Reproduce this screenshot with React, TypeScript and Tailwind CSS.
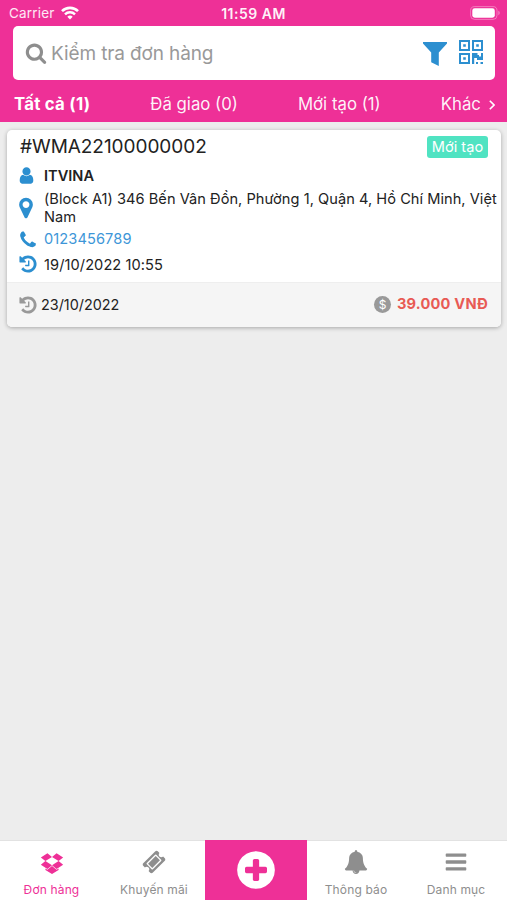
import React from 'react';
import clsx from 'clsx';

// 1792 grid glyph paths
const ICONS = {
  search:
    'M1216 832q0-185-131.5-316.5t-316.5-131.5-316.5 131.5-131.5 316.5 131.5 316.5 316.5 131.5 316.5-131.5 131.5-316.5zm512 832q0 52-38 90t-90 38q-54 0-90-38l-343-342q-179 124-399 124-143 0-273.5-55.5t-225-150-150-225-55.5-273.5 55.5-273.5 150-225 225-150 273.5-55.5 273.5 55.5 225 150 150 225 55.5 273.5q0 220-124 399l343 343q37 37 37 90z',
  user: 'M1536 1399q0 109-62.5 187t-150.5 78h-854q-88 0-150.5-78t-62.5-187q0-85 8.5-160.5t31.5-152 58.5-131 94-89 134.5-34.5q131 128 313 128t313-128q76 0 134.5 34.5t94 89 58.5 131 31.5 152 8.5 160.5zm-256-887q0 159-112.5 271.5t-271.5 112.5-271.5-112.5-112.5-271.5 112.5-271.5 271.5-112.5 271.5 112.5 112.5 271.5z',
  marker:
    'M1152 640q0-106-75-181t-181-75-181 75-75 181 75 181 181 75 181-75 75-181zm256 0q0 109-33 179l-364 774q-16 33-47.5 52t-67.5 19-67.5-19-46.5-52l-365-774q-33-70-33-179 0-212 150-362t362-150 362 150 150 362z',
  phone:
    'M1600 1240q0 27-10 70.5t-21 68.5q-21 50-122 106-94 51-186 51-27 0-52.5-3.5t-57.5-12.5-47.5-14.5-55.5-20.5-49-18q-98-35-175-83-128-79-264.5-215.5t-215.5-264.5q-48-77-83-175-3-9-18-49t-20.5-55.5-14.5-47.5-12.5-57.5-3.5-52.5q0-92 51-186 56-101 106-122 25-11 68.5-21t70.5-10q14 0 21 3 18 6 53 76 11 19 30 54t35 63.5 31 53.5q3 4 17.5 25t21.5 35.5 7 28.5q0 20-28.5 50t-62 55-62 53-28.5 46q0 9 5 22.5t8.5 20.5 14 24 11.5 19q76 137 174 235t235 174q2 1 19 11.5t24 14 20.5 8.5 22.5 5q18 0 46-28.5t53-62 55-62 50-28.5q14 0 28.5 7t35.5 21.5 25 17.5q25 15 53.5 31t63.5 35 54 30q70 35 76 53 3 7 3 21z',
  history:
    'M1664 896q0 156-61 298t-164 245-245 164-298 61q-172 0-327-72.5t-264-204.5q-7-10-6.5-22.5t8.5-20.5l137-138q10-9 25-9 16 2 23 12 73 95 179 147t225 52q104 0 198.5-40.5t163.5-109.5 109.5-163.5 40.5-198.5-40.5-198.5-109.5-163.5-163.5-109.5-198.5-40.5q-98 0-188 35.5t-160 101.5l137 138q31 30 14 69-17 40-59 40h-448q-26 0-45-19t-19-45v-448q0-42 40-59 39-17 69 14l130 129q107-101 244.5-156.5t284.5-55.5q156 0 298 61t245 164 164 245 61 298zm-640-288v448q0 14-9 23t-23 9h-320q-14 0-23-9t-9-23v-64q0-14 9-23t23-9h224v-352q0-14 9-23t23-9h64q14 0 23 9t9 23z',
  dropbox:
    'M402 829l494 305-342 285-490-319zm985 555v108l-490 293v1l-1-1-1 1v-1l-489-293v-108l147 96 342-284v-2l1 1 1-1v2l343 284zm-833-1145l342 285-494 304-338-270zm836 590l338 271-489 319-343-285zm-151-590l489 319-338 270-494-304z',
  ticket:
    'M1024 452l316 316-572 572-316-316zm-211 979l618-618q19-19 19-45t-19-45l-362-362q-18-18-45-18t-45 18l-618 618q-19 19-19 45t19 45l362 362q18 18 45 18t45-18zm889-637l-907 908q-37 37-90.5 37t-90.5-37l-126-126q56-56 56-136t-56-136-136-56-136 56l-125-126q-37-37-37-90.5t37-90.5l907-906q37-37 90.5-37t90.5 37l125 125q-56 56-56 136t56 136 136 56 136-56l126 125q37 37 37 90.5t-37 90.5z',
  plus: 'M1344 960v-128q0-26-19-45t-45-19h-256v-256q0-26-19-45t-45-19h-128q-26 0-45 19t-19 45v256h-256q-26 0-45 19t-19 45v128q0 26 19 45t45 19h256v256q0 26 19 45t45 19h128q26 0 45-19t19-45v-256h256q26 0 45-19t19-45zm320-64q0 209-103 385.5t-279.5 279.5-385.5 103-385.5-103-279.5-279.5-103-385.5 103-385.5 279.5-279.5 385.5-103 385.5 103 279.5 279.5 103 385.5z',
  bell: 'M912 1696q0-16-16-16-59 0-101.5-42.5t-42.5-101.5q0-16-16-16t-16 16q0 73 51.5 124.5t124.5 51.5q16 0 16-16zm816-288q0 52-38 90t-90 38h-448q0 106-75 181t-181 75-181-75-75-181h-448q-52 0-90-38t-38-90q50-42 91-88t85-119.5 74.5-158.5 50-206 19.5-260q0-152 117-282.5t307-158.5q-8-19-8-39 0-40 28-68t68-28 68 28 28 68q0 20-8 39 190 28 307 158.5t117 282.5q0 139 19.5 260t50 206 74.5 158.5 85 119.5 91 88z',
  bars: 'M1664 1344v128q0 26-19 45t-45 19h-1408q-26 0-45-19t-19-45v-128q0-26 19-45t45-19h1408q26 0 45 19t19 45zm0-512v128q0 26-19 45t-45 19h-1408q-26 0-45-19t-19-45v-128q0-26 19-45t45-19h1408q26 0 45 19t19 45zm0-512v128q0 26-19 45t-45 19h-1408q-26 0-45-19t-19-45v-128q0-26 19-45t45-19h1408q26 0 45 19t19 45z',
};

type IconName = keyof typeof ICONS;

const Icon = ({ name, className }: { name: IconName; className?: string }) => (
  <svg
    viewBox="0 0 1792 1792"
    fill="currentColor"
    className={clsx('shrink-0', className)}
    aria-hidden="true"
  >
    <path d={ICONS[name]} />
  </svg>
);

const WifiIcon = () => (
  <svg viewBox="0 0 18 14" className="w-[18px] h-[14px]" fill="none">
    <path d="M1 5.2a11.3 11.3 0 0 1 16 0" stroke="white" strokeWidth="2.6" />
    <path d="M4 8.3a7 7 0 0 1 10 0" stroke="white" strokeWidth="2.4" />
    <path d="M9 13.6 6.3 10.8a3.8 3.8 0 0 1 5.4 0z" fill="white" />
  </svg>
);

const BatteryIcon = () => (
  <svg viewBox="0 0 31 14" className="w-[31px] h-[14px]" fill="none">
    <rect
      x="0.6"
      y="0.6"
      width="26.4"
      height="12.8"
      rx="4"
      stroke="white"
      strokeOpacity="0.35"
    />
    <rect x="2.3" y="2.3" width="22.5" height="9.4" rx="2.4" fill="white" />
    <path d="M28.3 4.8a2.4 2.4 0 0 1 0 4.4z" fill="white" fillOpacity="0.4" />
  </svg>
);

const FilterIcon = () => (
  <svg viewBox="0 0 24 24" className="w-6 h-6" fill="currentColor">
    <path d="M0 0h24v1.6L15.8 10.5V24l-7.6-3.8V10.5L0 1.6z" />
  </svg>
);

const QrIcon = () => (
  <svg viewBox="0 0 24 24" className="w-6 h-6" fill="currentColor">
    <path
      fillRule="evenodd"
      d="M0 0h11v11H0zM2 2v7h7V2zM13 0h11v11H13zM15 2v7h7V2zM0 13h11v11H0zM2 15v7h7v-7z"
    />
    <path d="M4.2 4.2h2.6v2.6H4.2zM17.2 4.2h2.6v2.6h-2.6zM4.2 17.2h2.6v2.6H4.2z" />
    <path d="M13 13h5.5v2H20v1.5h2V13h2v7h-6v-2h-2.8V24H13zM17 22h2v2h-2zM21.5 22H24v2h-2.5z" />
  </svg>
);

const FILTERS = ['Tất cả (1)', 'Đã giao (0)', 'Mới tạo (1)'];

const TABS: { label: string; icon: IconName; active?: boolean }[] = [
  { label: 'Đơn hàng', icon: 'dropbox', active: true },
  { label: 'Khuyến mãi', icon: 'ticket' },
  { label: 'Tạo đơn', icon: 'plus' },
  { label: 'Thông báo', icon: 'bell' },
  { label: 'Danh mục', icon: 'bars' },
];

const Header = () => (
  <header className="h-[122px] bg-[#ee3097] text-white flex flex-col">
    <div className="h-[26px] px-[9px] grid grid-cols-3 items-center text-[13px]">
      <div className="flex items-center gap-[6px]">
        <span className="text-[13.5px] tracking-[0.2px] text-white/90">
          Carrier
        </span>
        <WifiIcon />
      </div>
      <span className="text-center text-[14px] font-semibold tracking-[0.5px] text-white/95">
        11:59 AM
      </span>
      <div className="flex justify-end -mr-[3px]">
        <BatteryIcon />
      </div>
    </div>

    <div className="ml-[13px] mr-[12px] h-[54px] bg-white rounded-[5px] flex items-center px-3">
      <Icon name="search" className="w-[22px] h-[22px] text-[#8e8e8e]" />
      <span className="ml-1 mt-[2px] text-[19px] tracking-[-0.12px] text-[#999]">
        Kiểm tra đơn hàng
      </span>
      <div className="ml-auto flex gap-3 text-[#2c8fd0]">
        <div className="pt-[2px]">
          <FilterIcon />
        </div>
        <QrIcon />
      </div>
    </div>

    <nav className="flex-1 flex items-center justify-between pt-[7px] pl-[14px] pr-[12px] text-[16.8px]">
      {FILTERS.map((label, i) => (
        <button
          key={label}
          className={i === 0 ? 'font-bold tracking-[0.25px]' : 'text-white/95'}
        >
          {label}
        </button>
      ))}
      <button className="flex items-center gap-[8px] text-white/95">
        Khác
        <svg viewBox="0 0 6 10" className="w-[6px] h-[10px]" fill="none">
          <path d="M0.8 0.8 5 5 0.8 9.2" stroke="white" strokeWidth="1.6" />
        </svg>
      </button>
    </nav>
  </header>
);

const OrderCard = () => (
  <article className="ml-[7px] mr-[6px] mt-[8px] h-[197px] bg-white rounded-[5px] overflow-hidden shadow-[0_1px_4px_rgba(0,0,0,0.3)] flex flex-col text-[14.6px] text-[#222]">
    <div className="flex-1 pl-[13px]">
      <div className="flex items-start justify-between pr-[13px] h-[34px]">
        <h2 className="text-[19px] leading-[34px] tracking-[-0.05px]">
          #WMA22100000002
        </h2>
        <span className="mt-[6px] h-[22px] w-[61px] rounded-[3px] bg-[#50e3c2] text-white text-[14.6px] leading-[23px] text-center">
          Mới tạo
        </span>
      </div>
      <div className="flex items-center h-[22px]">
        <Icon name="user" className="w-[19px] h-[19px] -ml-[3px] text-[#2c8fd0]" />
        <span className="ml-2 mt-[3px] font-semibold">ITVINA</span>
      </div>
      <div className="flex items-center h-[43px]">
        <Icon name="marker" className="w-[24px] h-[24px] -ml-[6px] text-[#2c8fd0]" />
        <p className="ml-[6px] leading-[18px] tracking-[0.04px] whitespace-nowrap">
          (Block A1) 346 Bến Vân Đồn, Phường 1, Quận 4, Hồ Chí Minh, Việt
          <br />
          Nam
        </p>
      </div>
      <div className="flex items-center h-[21px] text-[#3d96d8]">
        <Icon name="phone" className="w-[20px] h-[20px] -ml-[2px] text-[#2c8fd0]" />
        <span className="ml-[6px] mt-px tracking-[0.1px]">0123456789</span>
      </div>
      <div className="flex items-center h-[28px]">
        <Icon name="history" className="w-[20px] h-[20px] -ml-[2px] text-[#2c8fd0]" />
        <span className="ml-[6px] mt-[3px] tracking-[0.08px]">
          19/10/2022 10:55
        </span>
      </div>
    </div>
    <footer className="h-[45px] bg-[#f5f5f5] border-t border-[#eee] flex items-center pl-[13px] pr-[13px]">
      <Icon name="history" className="w-[20px] h-[20px] -ml-[2px] text-[#999]" />
      <span className="ml-[3px] text-[14.4px]">23/10/2022</span>
      <span className="ml-auto mb-[2px] size-[17px] rounded-full bg-[#999] text-white text-[12px] leading-[17px] text-center">
        $
      </span>
      <span className="ml-[6px] text-[14.6px] font-bold tracking-[0.2px] text-[#e85a54]">
        39.000 VNĐ
      </span>
    </footer>
  </article>
);

const TabBar = () => (
  <nav className="h-[60px] bg-white grid grid-cols-[103px_102px_102px_98px_102px]">
    {TABS.map(({ label, icon, active }) =>
      icon === 'plus' ? (
        <button
          key={label}
          aria-label={label}
          className="bg-[#ee3097] text-white flex items-center justify-center"
        >
          <Icon name="plus" className="w-[44px] h-[44px]" />
        </button>
      ) : (
        <button
          key={label}
          className={clsx(
            'flex flex-col items-center border-t border-[#e2e2e2] pt-[9px] text-[12px] tracking-[0.15px]',
            active ? 'text-[#ee3097]' : 'text-[#8e8e8e]'
          )}
        >
          <Icon name={icon} className="w-[24px] h-[24px]" />
          <span className="mt-[7px]">{label}</span>
        </button>
      )
    )}
  </nav>
);

const App = () => {
  return (
    <div className="w-full h-[900px] bg-[#ededed] flex flex-col font-[Inter,'Liberation_Sans',sans-serif]">
      <Header />
      <main className="flex-1">
        <OrderCard />
      </main>
      <TabBar />
    </div>
  );
};

export default App;
